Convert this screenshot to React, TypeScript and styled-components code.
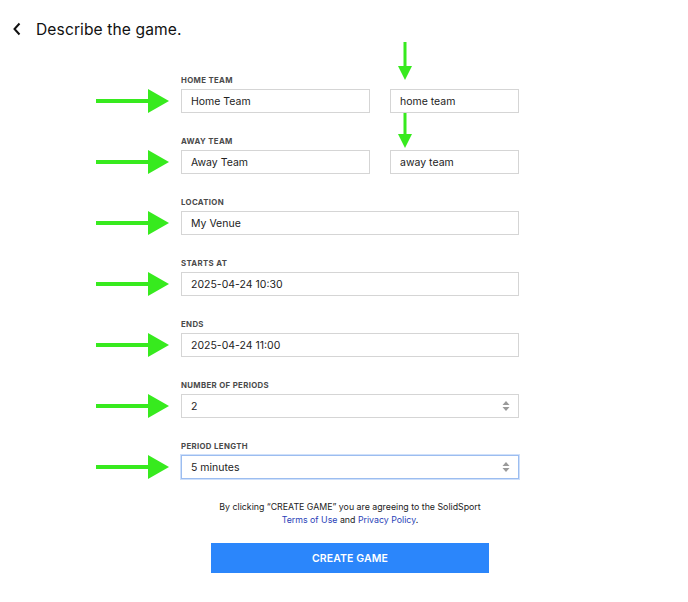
import React from 'react';
import styled, { createGlobalStyle } from 'styled-components';

const GlobalStyle = createGlobalStyle`
  body {
    margin: 0;
    background: #ffffff;
    font-family: Inter, "Liberation Sans", Arial, sans-serif;
    color: #1c1c1c;
  }
`;

const Page = styled.div`
  width: 688px;
  height: 602px;
  overflow: hidden;
`;

const Header = styled.header`
  display: flex;
  align-items: center;
  gap: 13px;
  height: 58px;
  padding-left: 11px;
  box-sizing: border-box;
`;

const BackButton = styled.button`
  display: flex;
  align-items: center;
  justify-content: center;
  width: 12px;
  height: 16px;
  padding: 0;
  border: none;
  background: none;
  color: #111;
`;

const Title = styled.h1`
  margin: 0;
  font-size: 15.6px;
  font-weight: 400;
  letter-spacing: 0.1px;
  color: #111;
`;

const Form = styled.form`
  display: flex;
  flex-direction: column;
  gap: 23px;
  padding-top: 17px;
`;

const Row = styled.div`
  display: grid;
  grid-template-columns: 74px 338px;
  column-gap: 11px;
  padding-left: 96px;
  align-items: end;
`;

const Field = styled.div`
  display: flex;
  flex-direction: column;
  gap: 4px;
`;

const Label = styled.label`
  font-size: 7.8px;
  line-height: 10px;
  font-weight: 700;
  letter-spacing: 0.35px;
  color: #4a4a4a;
  text-transform: uppercase;
`;

const Pair = styled.div`
  display: grid;
  grid-template-columns: 189px 129px;
  column-gap: 20px;
`;

const Box = styled.div<{ $focused?: boolean }>`
  position: relative;
  display: flex;
  align-items: center;
  height: 24px;
  box-sizing: border-box;
  padding: 0 8px 0 9px;
  border: 1px solid ${(p) => (p.$focused ? '#9cbdf0' : '#d5d5d5')};
  box-shadow: ${(p) => (p.$focused ? '0 0 0 1px #cfe0fa' : 'none')};
  background: #fff;
  font-size: 10.5px;
  color: #222;
`;

const Value = styled.span`
  flex: 1;
`;

const ArrowCell = styled.div`
  display: flex;
  align-items: center;
  height: 24px;
`;

const DownArrow = styled.svg<{ $top: number }>`
  position: absolute;
  left: 6px;
  top: ${(p) => p.$top}px;
`;

const Terms = styled.p`
  margin: 21px 0 0;
  padding-left: 12px;
  text-align: center;
  font-size: 8.8px;
  line-height: 13px;
  color: #222;
`;

const Link = styled.a`
  color: #2a3fb8;
  text-decoration: none;
`;

const ButtonRow = styled.div`
  display: flex;
  justify-content: center;
  padding: 17px 0 0 12px;
`;

const CreateButton = styled.button`
  width: 278px;
  height: 30px;
  border: none;
  background: #2b86fb;
  color: #fff;
  font-family: inherit;
  font-size: 10.5px;
  font-weight: 600;
  letter-spacing: 0.1px;
`;

const RightArrow = () => (
  <svg width="74" height="26" viewBox="0 0 74 26">
    <rect x="0" y="11" width="54" height="4" fill="#37ea1e" />
    <polygon points="52,1 73,13 52,25" fill="#37ea1e" />
  </svg>
);

const VerticalArrow = ({ top, length }: { top: number; length: number }) => (
  <DownArrow $top={top} width="16" height={length} viewBox={`0 0 16 ${length}`}>
    <rect x="6.5" y="0" width="3" height={length - 12} fill="#37ea1e" />
    <polygon points={`1,${length - 14} 15,${length - 14} 8,${length}`} fill="#37ea1e" />
  </DownArrow>
);

const Spinner = () => (
  <svg width="8" height="12" viewBox="0 0 8 12">
    <polygon points="4,1 7.5,5 0.5,5" fill="#9a9a9a" />
    <polygon points="4,11 7.5,7 0.5,7" fill="#9a9a9a" />
  </svg>
);

type FieldDef = {
  label: string;
  value: string;
  select?: boolean;
  focused?: boolean;
};

const fields: FieldDef[] = [
  { label: 'Location', value: 'My Venue' },
  { label: 'Starts at', value: '2025-04-24 10:30' },
  { label: 'Ends', value: '2025-04-24 11:00' },
  { label: 'Number of periods', value: '2', select: true },
  { label: 'Period length', value: '5 minutes', select: true, focused: true },
];

export default function App() {
  return (
    <Page>
      <GlobalStyle />
      <Header>
        <BackButton type="button">
          <svg width="10" height="14" viewBox="0 0 10 14">
            <path d="M7.5 1.5 L2.5 7 L7.5 12.5" fill="none" stroke="#111" strokeWidth="2" />
          </svg>
        </BackButton>
        <Title>Describe the game.</Title>
      </Header>

      <Form>
        <Row>
          <ArrowCell>
            <RightArrow />
          </ArrowCell>
          <Field>
            <Label>Home team</Label>
            <Pair>
              <Box>Home Team</Box>
              <Box>
                <VerticalArrow top={-48} length={38} />
                home team
              </Box>
            </Pair>
          </Field>
        </Row>
        <Row>
          <ArrowCell>
            <RightArrow />
          </ArrowCell>
          <Field>
            <Label>Away team</Label>
            <Pair>
              <Box>Away Team</Box>
              <Box>
                <VerticalArrow top={-38} length={35} />
                away team
              </Box>
            </Pair>
          </Field>
        </Row>
        {fields.map((f) => (
          <Row key={f.label}>
            <ArrowCell>
              <RightArrow />
            </ArrowCell>
            <Field>
              <Label>{f.label}</Label>
              <Box $focused={f.focused}>
                <Value>{f.value}</Value>
                {f.select && <Spinner />}
              </Box>
            </Field>
          </Row>
        ))}
      </Form>

      <Terms>
        By clicking “CREATE GAME” you are agreeing to the SolidSport
        <br />
        <Link href="#">Terms of Use</Link> and <Link href="#">Privacy Policy</Link>.
      </Terms>

      <ButtonRow>
        <CreateButton type="button">CREATE GAME</CreateButton>
      </ButtonRow>
    </Page>
  );
}
